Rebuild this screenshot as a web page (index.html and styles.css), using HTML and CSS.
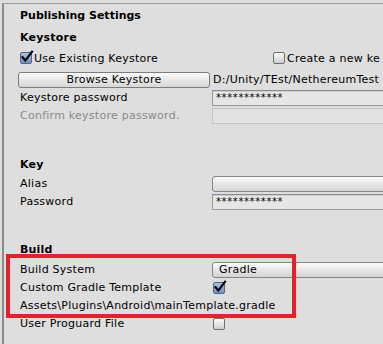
FILE: index.html
```html
<!DOCTYPE html>
<html>
<head>
<meta charset="utf-8">
<link rel="stylesheet" href="styles.css">
</head>
<body>
<div class="panel">
  <div class="title">Publishing Settings</div>

  <div class="header h-keystore">Keystore</div>
  <div class="check-row">
    <div class="check-left">
      <span class="cb checked"><svg viewBox="0 0 12 12" class="tick"><path d="M1.5 6.2 L4.3 9.6 L11 0.8" /></svg></span>
      <span class="cb-label">Use Existing Keystore</span>
    </div>
    <div class="check-right">
      <span class="cb"></span>
      <span class="cb-label">Create a new ke</span>
    </div>
  </div>
  <div class="row r-browse">
    <div class="btn">Browse Keystore</div>
    <div class="path">D:/Unity/TEst/NethereumTest</div>
  </div>
  <div class="row">
    <div class="label">Keystore password</div>
    <div class="field">************</div>
  </div>
  <div class="row">
    <div class="label disabled">Confirm keystore password.</div>
    <div class="field off"></div>
  </div>

  <div class="header h-key">Key</div>
  <div class="row">
    <div class="label">Alias</div>
    <div class="popup"></div>
  </div>
  <div class="row">
    <div class="label">Password</div>
    <div class="field">************</div>
  </div>

  <div class="header h-build">Build</div>
  <div class="row r-first">
    <div class="label">Build System</div>
    <div class="popup">Gradle</div>
  </div>
  <div class="row">
    <div class="label">Custom Gradle Template</div>
    <div class="ctl"><span class="cb checked"><svg viewBox="0 0 12 12" class="tick"><path d="M1.5 6.2 L4.3 9.6 L11 0.8" /></svg></span></div>
  </div>
  <div class="row">
    <div class="label wide">Assets\Plugins\Android\mainTemplate.gradle</div>
  </div>
  <div class="row">
    <div class="label">User Proguard File</div>
    <div class="ctl"><span class="cb"></span></div>
  </div>
</div>
<div class="highlight"></div>
</body>
</html>
```

FILE: styles.css
```css
html, body {
  margin: 0;
  padding: 0;
}
body {
  width: 383px;
  height: 344px;
  overflow: hidden;
  position: relative;
  background: #dedede;
  color: #000;
  font-family: "DejaVu Sans", "Liberation Sans", sans-serif;
  font-size: 11px;
  letter-spacing: 0.25px;
}
.panel {
  margin: 3px 0 0 2px;
  height: 341px;
  border-left: 2px solid #8c8c8c;
  border-top: 1px solid #9a9a9a;
  padding-left: 16px;
  box-sizing: border-box;
  width: 420px;
}
.title {
  font-weight: bold;
  height: 18px;
  line-height: 18px;
  margin-top: 3px;
  letter-spacing: 0;
}
.header {
  font-weight: bold;
  height: 18px;
  line-height: 18px;
  letter-spacing: 0.2px;
}
.h-keystore { margin-top: 4px; }
.h-key { margin-top: 32px; }
.h-build { margin-top: 31px; }

.check-row {
  display: grid;
  grid-template-columns: 253px 1fr;
  height: 18px;
  margin-top: 2px;
  align-items: center;
}
.check-left, .check-right {
  display: flex;
  align-items: center;
  white-space: nowrap;
}
.cb-label { margin-left: 2px; }

.cb {
  position: relative;
  display: inline-block;
  width: 10px;
  height: 10px;
  border: 1px solid #6f6f6f;
  border-radius: 2px;
  background: linear-gradient(#fafafa, #cfcfcf);
  flex: none;
}
.cb.checked {
  background: linear-gradient(#a9c1e4, #6f93c6);
  border-color: #4f6786;
}
.tick {
  position: absolute;
  left: 0;
  top: -2px;
  width: 12px;
  height: 12px;
  overflow: visible;
}
.tick path {
  fill: none;
  stroke: #000;
  stroke-width: 2.2;
  stroke-linecap: square;
  stroke-linejoin: miter;
}

.row {
  display: grid;
  grid-template-columns: 192px 1fr;
  height: 16px;
  margin-top: 2px;
  align-items: center;
  white-space: nowrap;
}
.r-browse { margin-top: 5px; }
.r-first { margin-top: 3px; }
.label { line-height: 16px; }
.label.wide { grid-column: 1 / 3; }
.disabled { color: #8a8a8a; }

.btn {
  margin-left: -2px;
  width: 192px;
  height: 16px;
  box-sizing: border-box;
  border: 1px solid #7d7d7d;
  border-radius: 3px;
  background: linear-gradient(#fbfbfb, #d6d6d6);
  text-align: center;
  line-height: 14px;
}
.path {
  padding-left: 1px;
  line-height: 16px;
}
.field {
  height: 16px;
  box-sizing: border-box;
  border: 1px solid #9b9b9b;
  border-top-color: #8a8a8a;
  background: #e6e6e6;
  padding-left: 3px;
  line-height: 13px;
  font-size: 10px;
  letter-spacing: 0.6px;
  box-shadow: inset 0 1px 0 #cfcfcf;
}
.field.off {
  border-color: #c6c6c6;
  background: #e2e2e2;
  box-shadow: none;
}
.popup {
  height: 16px;
  box-sizing: border-box;
  border: 1px solid #858585;
  border-radius: 3px;
  background: linear-gradient(#fafafa, #d3d3d3);
  padding-left: 6px;
  line-height: 14px;
}
.ctl {
  display: flex;
  align-items: center;
  padding-left: 1px;
}

.highlight {
  position: absolute;
  left: 6px;
  top: 254px;
  width: 282px;
  height: 56px;
  border: 4px solid #e8202a;
}
```
